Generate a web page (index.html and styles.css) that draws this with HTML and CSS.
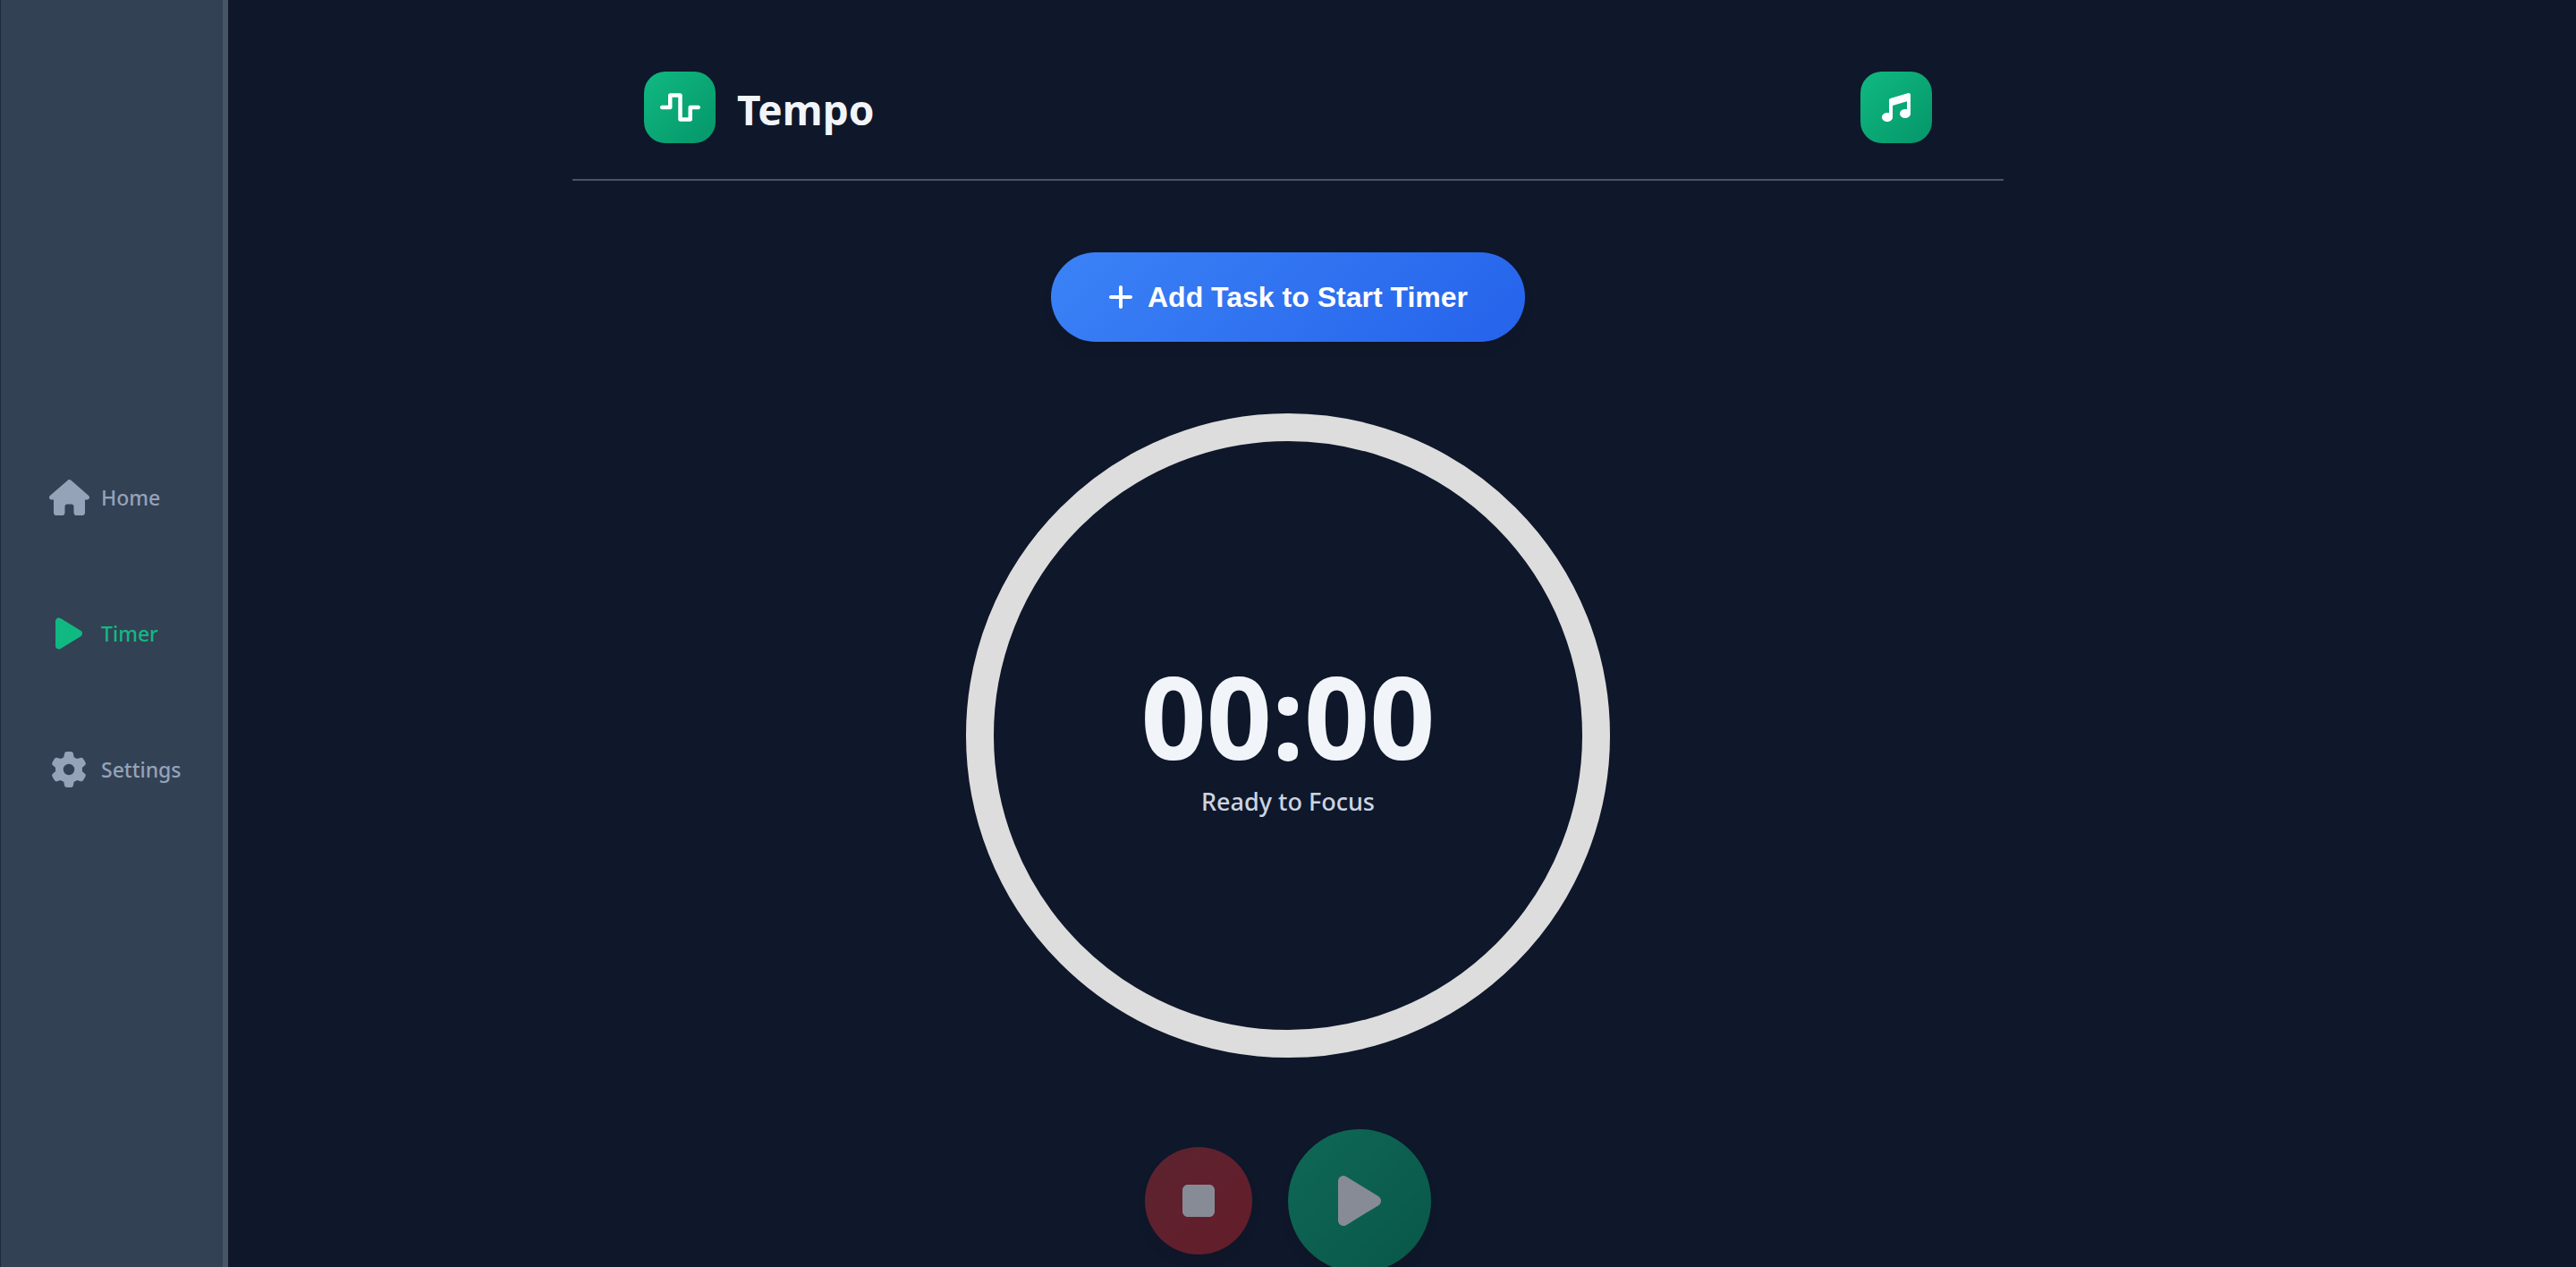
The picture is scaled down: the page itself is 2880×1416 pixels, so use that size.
FILE: index.html
```html
<!DOCTYPE html>
<html lang="en">
<head>
<meta charset="utf-8">
<meta name="viewport" content="width=device-width, initial-scale=1">
<title>Tempo</title>
<link rel="stylesheet" href="styles.css">
</head>
<body>
<nav class="sidebar" aria-label="Main">
  <a class="nav-item" href="#home">
    <span class="nav-icon"><svg class="icon icon-md" viewBox="0 0 576 512" aria-hidden="true"><path d="M575.800 255.500c0 18-15 32.100-32 32.100h-32l.7 160.200c0 2.700-.2 5.400-.5 8.100V472c0 22.100-17.900 40-40 40H456c-1.100 0-2.200 0-3.300-.1c-1.400 .1-2.800 .1-4.200 .1H416 392c-22.100 0-40-17.900-40-40V448 384c0-17.700-14.300-32-32-32H256c-17.700 0-32 14.300-32 32v64 24c0 22.100-17.900 40-40 40H160 128.100c-1.500 0-3-.1-4.500-.2c-1.200 .1-2.400 .2-3.600 .2H104c-22.100 0-40-17.900-40-40V360c0-.9 0-1.900 .1-2.800V287.600H32c-18 0-32-14-32-32.100c0-9 3-17 10-24L266.400 8c7-7 15-8 22-8s15 2 21 7L564.800 231.500c8 7 12 15 11 24z"/></svg></span>
    <span>Home</span>
  </a>
  <a class="nav-item nav-item-active" href="#timer" aria-current="page">
    <span class="nav-icon"><svg class="icon icon-md" viewBox="0 0 384 512" aria-hidden="true"><path d="M73 39c-14.800-9.100-33.400-9.400-48.500-.9S0 62.600 0 80V432c0 17.400 9.400 33.400 24.500 41.900s33.700 8.100 48.500-.9L361 297c14.300-8.700 23-24.200 23-41s-8.700-32.200-23-41L73 39z"/></svg></span>
    <span>Timer</span>
  </a>
  <a class="nav-item" href="#settings">
    <span class="nav-icon"><svg class="icon icon-md" viewBox="0 0 512 512" aria-hidden="true"><path d="M495.900 166.600c3.200 8.700 .5 18.400-6.400 24.600l-43.300 39.400c1.100 8.300 1.700 16.800 1.700 25.400s-.6 17.100-1.700 25.400l43.300 39.400c6.900 6.200 9.600 15.900 6.400 24.600c-4.400 11.900-9.700 23.300-15.800 34.300l-4.700 8.100c-6.600 11-14 21.400-22.100 31.200c-5.900 7.200-15.700 9.600-24.500 6.800l-55.700-17.700c-13.400 10.300-28.200 18.900-44 25.400l-12.500 57.100c-2 9.100-9 16.300-18.200 17.800c-13.800 2.300-28 3.500-42.500 3.500s-28.700-1.200-42.500-3.500c-9.200-1.500-16.200-8.700-18.200-17.800l-12.500-57.100c-15.800-6.500-30.600-15.100-44-25.400L83.100 425.900c-8.800 2.800-18.600 .3-24.500-6.800c-8.100-9.800-15.500-20.200-22.100-31.200l-4.700-8.100c-6.100-11-11.400-22.400-15.800-34.300c-3.200-8.700-.5-18.400 6.400-24.600l43.300-39.400C64.600 273.100 64 264.600 64 256s.6-17.100 1.700-25.400L22.400 191.200c-6.900-6.200-9.600-15.900-6.400-24.600c4.400-11.900 9.700-23.300 15.800-34.300l4.700-8.100c6.600-11 14-21.400 22.100-31.200c5.900-7.200 15.700-9.600 24.500-6.800l55.700 17.700c13.400-10.300 28.200-18.900 44-25.400l12.500-57.100c2-9.100 9-16.300 18.200-17.800C227.300 1.200 241.500 0 256 0s28.700 1.200 42.500 3.500c9.200 1.500 16.200 8.700 18.200 17.800l12.500 57.100c15.800 6.500 30.600 15.100 44 25.400l55.700-17.700c8.800-2.800 18.600-.3 24.500 6.800c8.100 9.800 15.500 20.200 22.100 31.200l4.700 8.100c6.100 11 11.400 22.400 15.800 34.300zM256 336a80 80 0 1 0 0-160 80 80 0 1 0 0 160z"/></svg></span>
    <span>Settings</span>
  </a>
</nav>
<main class="app">
  <header class="header">
    <div class="brand">
      <span class="tile"><svg class="icon icon-logo" viewBox="0 0 640 512" aria-hidden="true"><path d="M128 64c0-17.700 14.300-32 32-32H320c17.700 0 32 14.300 32 32V416h96V256c0-17.700 14.300-32 32-32H608c17.700 0 32 14.300 32 32s-14.300 32-32 32H512V448c0 17.700-14.300 32-32 32H320c-17.700 0-32-14.300-32-32V96H192V256c0 17.700-14.300 32-32 32H32c-17.700 0-32-14.300-32-32s14.300-32 32-32h96V64z"/></svg></span>
      <h1 class="title">Tempo</h1>
    </div>
    <button class="tile" type="button" aria-label="Music"><svg class="icon icon-sm" viewBox="0 0 512 512" aria-hidden="true"><path d="M499.100 6.300c8.100 6 12.900 15.600 12.900 25.700v72V368c0 44.200-43 80-96 80s-96-35.800-96-80s43-80 96-80c11.200 0 22 1.600 32 4.600V147L192 223.800V432c0 44.200-43 80-96 80s-96-35.800-96-80s43-80 96-80c11.200 0 22 1.600 32 4.600V200 128c0-14.100 9.300-26.600 22.800-30.700l320-96c9.700-2.900 20.200-1.100 28.300 5z"/></svg></button>
  </header>
  <button class="add-task" type="button">
    <svg class="icon icon-sm" viewBox="0 0 448 512" aria-hidden="true"><path d="M432 256c0 17.700-14.300 32-32 32H256v144c0 17.700-14.300 32-32 32s-32-14.300-32-32V288H48c-17.700 0-32-14.300-32-32s14.300-32 32-32H192V80c0-17.700 14.300-32 32-32s32 14.300 32 32v144h144c17.700 0 32 14.300 32 32z"/></svg>
    <span>Add Task to Start Timer</span>
  </button>
  <section class="dial" aria-label="Timer">
    <div class="time">00:00</div>
    <p class="status">Ready to Focus</p>
  </section>
  <div class="controls">
    <button class="control control-stop" type="button" aria-label="Stop" disabled><svg class="icon icon-lg" viewBox="0 0 384 512" aria-hidden="true"><path d="M0 128C0 92.700 28.700 64 64 64H320c35.300 0 64 28.700 64 64V384c0 35.300-28.700 64-64 64H64c-35.300 0-64-28.700-64-64V128z"/></svg></button>
    <button class="control control-play" type="button" aria-label="Start" disabled><svg class="icon icon-xl" viewBox="0 0 384 512" aria-hidden="true"><path d="M73 39c-14.800-9.100-33.400-9.400-48.500-.9S0 62.600 0 80V432c0 17.400 9.400 33.400 24.500 41.900s33.700 8.100 48.500-.9L361 297c14.300-8.700 23-24.200 23-41s-8.700-32.200-23-41L73 39z"/></svg></button>
  </div>
</main>
</body>
</html>
```
FILE: styles.css
```css
:root {
  --bg: #0f172a;
  --panel: #334155;
  --line: #475569;
  --text: #f1f5f9;
  --text-soft: #cbd5e1;
  --muted: #94a3b8;
  --accent: #10b981;
  --accent-dark: #059669;
  --shadow: 0 8px 12px rgba(0, 0, 0, 0.06);
}

* {
  box-sizing: border-box;
}

body {
  margin: 0;
  height: 100vh;
  overflow: hidden;
  display: grid;
  grid-template-columns: 255px minmax(0, 1fr) 255px;
  background: var(--bg);
  color: var(--text);
  font-family: "Segoe UI", "Noto Sans", sans-serif;
}

button {
  border: 0;
  padding: 0;
  color: #fff;
  cursor: pointer;
}

.icon {
  display: block;
  width: auto;
  fill: currentColor;
}

.icon-sm { height: 32px; }
.icon-logo { height: 36px; }
.icon-md { height: 40px; }
.icon-lg { height: 48px; }
.icon-xl { height: 64px; }

/* Sidebar */
.sidebar {
  display: flex;
  flex-direction: column;
  justify-content: center;
  gap: 72px;
  height: 100vh;
  padding-left: 52px;
  background: var(--panel);
  border-left: 1px solid #1e293b;
  border-right: 6px solid var(--line);
}

.nav-item {
  display: flex;
  align-items: center;
  gap: 12px;
  height: 80px;
  color: var(--muted);
  font-size: 23px;
  font-weight: 500;
  line-height: 32px;
  text-decoration: none;
}

.nav-item-active {
  color: var(--accent);
}

.nav-icon {
  display: flex;
  justify-content: center;
  width: 48px;
}

/* Main column */
.app {
  display: flex;
  flex-direction: column;
  align-items: center;
  gap: 80px;
  width: 100%;
  max-width: 1600px;
  margin: 0 auto;
  padding-top: 40px;
}

.header {
  display: flex;
  align-items: center;
  justify-content: space-between;
  width: 100%;
  padding: 40px 80px;
  border-bottom: 2px solid var(--line);
}

.brand {
  display: flex;
  align-items: flex-end;
  gap: 24px;
}

.tile {
  display: flex;
  align-items: center;
  justify-content: center;
  width: 80px;
  height: 80px;
  border-radius: 24px;
  background: linear-gradient(135deg, var(--accent), var(--accent-dark));
  color: #fff;
}

.title {
  margin: 0;
  font-size: 46px;
  font-weight: 700;
  line-height: 76px;
}

.add-task {
  display: flex;
  align-items: center;
  gap: 16px;
  height: 100px;
  padding: 0 64px;
  border-radius: 50px;
  background: linear-gradient(135deg, #3b82f6, #2563eb);
  box-shadow: var(--shadow);
  font: bold 32px/40px Arial, "Liberation Sans", sans-serif;
}

.dial {
  display: flex;
  flex-direction: column;
  align-items: center;
  justify-content: center;
  flex-shrink: 0;
  width: 720px;
  height: 720px;
  border: 31px solid #ddd;
  border-radius: 50%;
}

.time {
  font-size: 128px;
  font-weight: 700;
  line-height: 144px;
}

.status {
  margin: 4px 0 0;
  color: var(--text-soft);
  font-size: 27px;
  font-weight: 500;
  line-height: 40px;
}

.controls {
  display: flex;
  align-items: center;
  gap: 40px;
}

.control {
  display: flex;
  align-items: center;
  justify-content: center;
  width: 120px;
  height: 120px;
  border-radius: 50%;
  box-shadow: var(--shadow);
}

.control:disabled {
  opacity: 0.5;
  cursor: not-allowed;
}

.control-stop {
  background: linear-gradient(135deg, #a93136, #b9222a);
}

.control-play {
  width: 160px;
  height: 160px;
  background: linear-gradient(135deg, var(--accent), var(--accent-dark));
}
```
